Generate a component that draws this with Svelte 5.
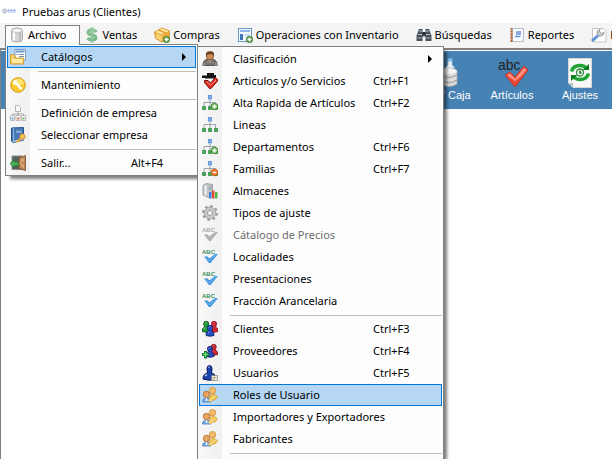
<script>
  const bar = [
    { label: 'Archivo', icon: 'db', open: true },
    { label: 'Ventas', icon: 'dollar' },
    { label: 'Compras', icon: 'box' },
    { label: 'Operaciones con Inventario', icon: 'form' },
    { label: 'Búsquedas', icon: 'binoculars' },
    { label: 'Reportes', icon: 'report' },
    { label: 'Herramientas', icon: 'tool' }
  ];
  const fileMenu = [
    { label: 'Catálogos', icon: 'folder', sub: true, active: true },
    null,
    { label: 'Mantenimiento', icon: 'wrench' },
    null,
    { label: 'Definición de empresa', icon: 'org' },
    { label: 'Seleccionar empresa', icon: 'book' },
    null,
    { label: 'Salir...', icon: 'exit', key: 'Alt+F4' }
  ];
  const catalogMenu = [
    { label: 'Clasificación', icon: 'person', sub: true },
    { label: 'Articulos y/o Servicios', icon: 'abcRed', key: 'Ctrl+F1' },
    { label: 'Alta Rapida de Artículos', icon: 'treeAdd', key: 'Ctrl+F2' },
    { label: 'Lineas', icon: 'tree' },
    { label: 'Departamentos', icon: 'treeAdd', key: 'Ctrl+F6' },
    { label: 'Familias', icon: 'treeDel', key: 'Ctrl+F7' },
    { label: 'Almacenes', icon: 'server' },
    { label: 'Tipos de ajuste', icon: 'gear' },
    { label: 'Cátalogo de Precios', icon: 'abcGray', disabled: true },
    { label: 'Localidades', icon: 'abc' },
    { label: 'Presentaciones', icon: 'abc' },
    { label: 'Fracción Arancelaria', icon: 'abc' },
    null,
    { label: 'Clientes', icon: 'clients', key: 'Ctrl+F3' },
    { label: 'Proveedores', icon: 'suppliers', key: 'Ctrl+F4' },
    { label: 'Usuarios', icon: 'user', key: 'Ctrl+F5' },
    { label: 'Roles de Usuario', icon: 'roles', active: true },
    { label: 'Importadores y Exportadores', icon: 'roles' },
    { label: 'Fabricantes', icon: 'roles' },
    null
  ];
</script>

{#snippet pawn(x, y, c, d)}
  <g transform="translate({x} {y})">
    <path d="M.5 10.500Q0 7 3 6L2 3.500Q1.500 .3 4.500.3T7 3.500L6 6Q9 7 8.500 10.500Q4.500 12 .5 10.500Z" fill={c} stroke={d} stroke-width=".8" />
    <path d="M3.500 2.500 4.500 1.500M2.500 7.500 3.500 7" stroke="#fff" stroke-width=".9" opacity=".75" />
  </g>
{/snippet}

{#snippet icon(name)}
  <svg class="icon" viewBox="0 0 16 16" aria-hidden="true" fill="none">
    {#if name === 'db'}
      <path d="M2.500 3.500Q2.500 1 8 1T13.500 3.500V12.500Q13.500 15 8 15T2.500 12.500Z" fill="#d4d4d4" stroke="#a2a2a2" stroke-width=".8" />
      <path d="M5 4V13.500" stroke="#fff" stroke-width="2" />
      <path d="M11 4V14" stroke="#bcbcbc" stroke-width="2" />
      <ellipse cx="8" cy="3.500" rx="5.200" ry="2" fill="#f7f7f7" stroke="#b0b0b0" stroke-width=".7" />
    {:else if name === 'dollar'}
      <path d="M12.500 5Q11 3 8 3Q4 3 4 5.500Q4 7.500 8 8Q12 8.700 12 10.700Q12 13 8 13Q5 13 3.500 11M8 .5V15.500" stroke="#7cba89" stroke-width="3" />
      <path d="M11.500 4Q8 2.500 5 4.500M8 1V15" stroke="#a9d8b1" stroke-width=".8" />
    {:else if name === 'box'}
      <path d="M.5 5 8 1 15.500 4V11L8 15 1.500 11.500Z" fill="#f1b13f" stroke="#c98a2a" stroke-width=".8" />
      <path d="M.5 5 8 7.800 15.500 4 8 1Z" fill="#ffe7a0" stroke="#d99d32" stroke-width=".6" />
      <path d="M2 6.200 8 8.500V14.200L2 11.200Z" fill="#fbd170" />
      <path d="M4.500 3 11.500 6V8.500" stroke="#e3a133" stroke-width="1.500" />
      {@render plus()}
    {:else if name === 'form'}
      <rect x="1.500" y="1.500" width="13" height="13" fill="#f4f8fd" stroke="#6c95c8" />
      <path d="M3 4H13" stroke="#8db4e6" stroke-width="2" />
      <path d="M4.500 7V13" stroke="#4173b5" stroke-width="3" />
      <path d="M7.500 7H13V9.500H7.500Z" fill="#c9dcf4" />
      {@render plus()}
    {:else if name === 'binoculars'}
      <path d="M3 2H6.500V5H9.500V2H13L15.500 9V14H9.500V9.500H6.500V14H.5V9Z" fill="#46525c" />
      <path d="M3 4H6M10 4H13M2 7.500H6M10 7.500H14M1.500 11H5.500M10.500 11H14.500" stroke="#aeb8bf" />
      <path d="M7 6.500H9" stroke="#161d22" stroke-width="2" />
    {:else if name === 'report'}
      <path d="M3.500 1.500H14.500V14.500H3.500Z" fill="#fbfcff" stroke="#b4bdcc" />
      <path d="M2.500 1V15" stroke="#a9613a" stroke-width="2" />
      <path d="M1 3H3.500M1 6H3.500M1 9H3.500M1 12H3.500" stroke="#e6c4a8" />
      <path d="M7 5H12M7 7H12M6 9.500H11.500" stroke="#6690d8" stroke-width="1.300" />
      <path d="M14.500 11 11.500 14.500H14.500Z" fill="#d4dbe5" />
    {:else if name === 'tool'}
      <path d="M1.500 1.500H12L15 4.500V15H1.500Z" fill="#fff" stroke="#c6c6c6" />
      <path d="M1 14 7 8.500" stroke="#5f92d6" stroke-width="3" />
      <path d="M6 6Q6 3 9 2.500L8.500 5 10.500 6.500 13 5.500Q12.500 9.500 8 9Z" fill="#ccd2d9" stroke="#80868e" stroke-width=".8" />
    {:else if name === 'folder'}
      <path d="M5 .5H15.500V11H5Z" fill="#fffdf4" stroke="#7c9cc8" />
      <path d="M6 2.500H14.500" stroke="#6c9ad5" stroke-width="2" />
      <path d="M6.500 5.500H8M9 5.500H14M9 7.500H14" stroke="#7892b7" />
      <path d="M.5 15V5.500H4L5 7V9H13.500V15Z" fill="#f6ce67" stroke="#d6a03c" />
      <path d="M2 10H12.500V14H2Z" fill="#ffe7a4" />
    {:else if name === 'wrench'}
      <circle cx="8" cy="8" r="7.300" fill="#f7ca2d" stroke="#d89a12" />
      <path d="M2 7Q3 2 8 1.800T14 7Q8 10 2 7Z" fill="#ffe570" />
      <path d="M6 6 11 11.500" stroke="#fff" stroke-width="2.500" stroke-linecap="round" />
      <path d="M4 6.500 4.500 4 7 3.500M3.500 6 6 7" stroke="#fff" stroke-width="1.500" />
    {:else if name === 'org'}
      <path d="M5.500.5H8.500L10.500 2.500V6.500H5.500Z" fill="#fff" stroke="#a5a5a5" stroke-width=".8" />
      <path d="M8 6.500V9M2.500 11V9H13.500V11M8 9V11" stroke="#aaa" />
      <path d="M.5 10.500H4.500V15.500H.5ZM6 10.500H10V15.500H6ZM11.500 10.500H15.500V15.500H11.500Z" fill="#fff" stroke="#aaa" stroke-width=".8" />
      <path d="M1.500 12.500H3.500V14.500H1.500Z" fill="#5ba4e6" /><path d="M7 12.500H9V14.500H7Z" fill="#e97757" /><path d="M12.500 12.500H14.500V14.500H12.500Z" fill="#6abb62" />
    {:else if name === 'book'}
      <path d="M1.500 1 13.500.5V13L3 15.500 1.500 14Z" fill="#4777b5" stroke="#24528c" />
      <path d="M3.500 1V14" stroke="#8fb3de" /><path d="M6 3.500H11.500V6H6Z" fill="#80a8da" />
      <path d="M3 14.500 13.500 12" stroke="#e7edf5" />
      <circle cx="12.500" cy="9.500" r="2.700" fill="#f7c55c" stroke="#be7f24" stroke-width=".8" />
      <path d="M11 11 6.500 15M8 13.500 9.500 15" stroke="#e3a33b" stroke-width="1.700" />
    {:else if name === 'exit'}
      <path d="M2 1H12V14.500H2Z" fill="#5b625e" stroke="#858b84" />
      <path d="M9 2.500 15.500.5V15.500L9 13.500Z" fill="#b98453" stroke="#7b4e2b" stroke-width=".8" />
      <path d="M11 4 14 3V7H11ZM11 9H14V13L11 12Z" fill="#d5a675" /><circle cx="10.500" cy="8" r=".7" fill="#ffe084" />
      <path d="M0 8.500 4.500 4.500V7H8.500V10.500H4.500V13Z" fill="#4eb055" stroke="#1f7730" stroke-width=".8" />
    {:else if name === 'person'}
      <path d="M.8 14.500Q1 9 5 8.500H11Q15 9 15.200 14.500Z" fill="#77716b" stroke="#5a5552" />
      <path d="M6 8.500 8 13 10 8.500Z" fill="#9a948c" /><path d="M3.500 11.500H12.500" stroke="#918b85" />
      <circle cx="8" cy="5" r="3.800" fill="#c98a55" stroke="#7a4a2a" stroke-width=".7" />
      <path d="M4 5Q3 .5 8 .3T12 5Q10.500 3 8 3T4 5Z" fill="#6c4020" />
      <path d="M2 12V15M14 12V15" stroke="#b7b1a8" />
    {:else if name === 'abcRed'}
      <path d="M5 0H12V2H14V5.500H3V5H0V2.500H5Z" fill="#171717" />
      <path d="M2.500 7.500H6L8.500 10 13.500 4.500 15.500 6.500V8L9 15.500H7.500L2.500 9.500Z" fill="#e62d21" stroke="#6e0c08" />
      <path d="M4.500 8.500 8.500 12 14 7" stroke="#ff9a8f" />
    {:else if name === 'tree' || name === 'treeAdd' || name === 'treeDel'}
      <path d="M8 4.500V7.500M2 11V7.500H13.500V11M8 7.500V11" stroke="#9aa4aa" />
      <rect x="6.500" y=".5" width="3" height="3.500" fill="#78aef0" stroke="#5c8fd6" stroke-width=".8" />
      <path d="M.5 11.500H3.500V14.500H.5ZM6.500 11.500H9.500V14.500H6.500ZM12.500 11.500H15.500V14.500H12.500Z" fill="#49ad56" stroke="#2f8a44" stroke-width=".8" />
      {#if name === 'treeAdd'}<circle cx="12.500" cy="11.500" r="3.300" fill="#74bc60" stroke="#3b8233" stroke-width=".8" /><path d="M10.500 11.500H14.500M12.500 9.500V13.500" stroke="#fff" stroke-width="1.400" />{/if}
      {#if name === 'treeDel'}<circle cx="12.500" cy="11.500" r="3.300" fill="#f07827" stroke="#bf4b10" stroke-width=".8" /><path d="M10.500 11.500H14.500" stroke="#fff" stroke-width="1.400" />{/if}
    {:else if name === 'server'}
      <path d="M1 2.500 4 .5 10.500 1.500V11L6.500 14.500 1 12Z" fill="#c4c7ca" stroke="#8c9094" stroke-width=".8" />
      <path d="M3.500 2.500V12.500" stroke="#eceef0" stroke-width="2" /><path d="M6.500 4H9.500M6.500 6H9.500" stroke="#8c9298" />
      <path d="M7 9H9.500V15.500H7Z" fill="#4381e0" /><path d="M10 7.500H12.500V15.500H10Z" fill="#df4937" /><path d="M13 9H15.500V15.500H13Z" fill="#52b849" />
    {:else if name === 'gear'}
      <circle cx="8" cy="8" r="6.800" stroke="#999" stroke-width="2.200" stroke-dasharray="2.650 2.690" />
      <circle cx="8" cy="8" r="4.300" stroke="#c8c8c8" stroke-width="3.300" />
      <circle cx="8" cy="8" r="5.800" stroke="#a0a0a0" stroke-width=".8" /><circle cx="8" cy="8" r="2.500" fill="#f5f5f5" stroke="#949494" />
    {:else if name === 'abc' || name === 'abcGray'}
      <text x="0" y="5" font-family="Liberation Sans, sans-serif" font-size="6" font-weight="bold" fill={name === 'abc' ? '#438e5b' : '#aaa'}>ABC</text>
      <path d="M2 7.500H5.500L7.500 9.500 13 5H16L8.500 14H7Z" fill={name === 'abc' ? '#3c93e0' : '#ababab'} />
      <path d="M4 8.500 7.500 12 14 5.500" stroke={name === 'abc' ? '#7cc0f5' : '#c4c4c4'} />
    {:else if name === 'clients'}
      {@render pawn(-.3, 0, '#1f9b38', '#06491a')}{@render pawn(7.5, 0, '#d22934', '#770b17')}{@render pawn(3.5, 4, '#2551c5', '#081b66')}
    {:else if name === 'suppliers'}
      {@render pawn(7.2, 1, '#d12831', '#730e18')}{@render pawn(3.5, 3, '#244bb8', '#091b62')}
      <path d="M0 11.500H7M3.500 8V15.500" stroke="#0b732d" stroke-width="3" /><path d="M.8 11.500H6.200M3.500 9V14.500" stroke="#67dd76" stroke-width="1.300" />
    {:else if name === 'user'}
      <path d="M1 14Q1 9 5.500 8L5 4Q5 .5 7.500.5T10 4L9.500 8Q14 9 14 14Q7 16.500 1 14Z" fill="#1c43ab" stroke="#07195d" />
      <path d="M6.500 2.500 7.500 1.800M3 11 5 9.500" stroke="#b8d0ff" stroke-width="1.300" />
      <path d="M9.500 10.500H15.500V15.500H9.500Z" fill="#f4f0dd" stroke="#808080" stroke-width=".7" /><path d="M10.500 12.500H14.500M10.500 14.200H13" stroke="#a58a5b" stroke-width=".8" />
    {:else if name === 'roles'}
      <circle cx="10.500" cy="3.700" r="3.200" fill="#f3bb69" stroke="#c98a3c" stroke-width=".8" />
      <path d="M7.500 11Q7.500 7.500 11 7.500T15.500 10L13 13H7.500Z" fill="#f4d465" stroke="#d0a23c" stroke-width=".8" />
      <circle cx="4.500" cy="7.500" r="3.200" fill="#eaa763" stroke="#a9632a" stroke-width=".8" />
      <path d="M.5 15Q.5 11 4.500 11T9 15Z" fill="#75ade8" stroke="#4b7ebc" stroke-width=".8" />
      <path d="M4.500 11V14" stroke="#fff" stroke-width="1.500" /><path d="M7 14 13.500 9" stroke="#e2a540" stroke-width="3" /><path d="M7 14 13.500 9" stroke="#ffe07a" stroke-width="1.700" />
    {/if}
  </svg>
{/snippet}

{#snippet plus()}
  <circle cx="12.500" cy="12.500" r="3.200" fill="#629c46" stroke="#3b7431" stroke-width=".7" />
  <path d="M10.500 12.500H14.500M12.500 10.500V14.500" stroke="#fff" stroke-width="1.400" />
{/snippet}

{#snippet menu(items)}
  {#each items as item}
    {#if item}
      <button class="item" class:active={item.active} disabled={item.disabled} role="menuitem">
        {@render icon(item.icon)}
        <span class="label">{item.label}</span>
        {#if item.key}<span class="key">{item.key}</span>{/if}
        {#if item.sub}<svg class="arrow" viewBox="0 0 4 8" aria-hidden="true"><path d="M0 0 4 4 0 8Z" /></svg>{/if}
      </button>
    {:else}
      <hr />
    {/if}
  {/each}
{/snippet}

<div class="window">
  <header class="title">
    <svg class="logo" viewBox="0 0 14 7" aria-hidden="true" fill="none">
      <circle cx="2.500" cy="3" r="1.800" stroke="#9aa4bd" /><path d="M3 .5V5.500" stroke="#b0b6c6" />
      <path d="M5.500 2.500H7.500M8.500 2.500H10.500M11.500 2.500H13.500" stroke="#7c96e6" stroke-width="2" /><path d="M5.500 4.500H13.500" stroke="#d5dcf7" />
    </svg>
    <span>Pruebas arus (Clientes)</span>
  </header>

  <nav class="menubar">
    {#each bar as entry}
      <button class:open={entry.open}>{@render icon(entry.icon)}<span>{entry.label}</span></button>
    {/each}
  </nav>

  <main>
    <div class="toolbar">
      <button>
        <svg class="big" viewBox="0 0 32 32" aria-hidden="true">
          <path d="M20 9V3H24V9L27 12H17Z" fill="#eef3f8" stroke="#b3c3d2" stroke-width=".8" /><path d="M20 4H24" stroke="#7cc0f0" stroke-width="3" />
          <path d="M12 15H29V28Q21 33 12 28Z" fill="#dcdcdc" stroke="#aaa" stroke-width=".8" />
          <path d="M12 19Q21 24 29 19M12 24Q21 29 29 24" fill="none" stroke="#999" /><ellipse cx="20.500" cy="15" rx="8.500" ry="3" fill="#f6f6f6" />
        </svg>
        <span>CxC / Caja</span>
      </button>
      <button>
        <svg class="big" viewBox="0 0 32 32" aria-hidden="true">
          <text x="2" y="14" font-family="Liberation Sans, sans-serif" font-size="14" fill="#222">abc</text>
          <path d="M9 19 14 16 19 21 28 10 32 14 19 31Z" fill="#ee4938" stroke="#b9372c" stroke-linejoin="round" /><path d="M11 19 14 17.500 19 23 28 12 30.500 14Q25 21 19 25Z" fill="#ff9687" />
        </svg>
        <span>Artículos</span>
      </button>
      <button>
        <svg class="big" viewBox="0 0 32 32" aria-hidden="true" fill="none">
          <path d="M4.500 2.500H27.500V31.500H9L4.500 27Z" fill="#f7f8f6" stroke="#d6d9d7" /><path d="M4.500 27H9V31.500Z" fill="#b8c0c0" />
          <path d="M7.500 15.500Q9 9.500 16 9.500Q20 9.500 22 12M24.500 17.500Q23 23.500 16 23.500Q12 23.500 10 21" stroke="#1fa535" stroke-width="3.500" />
          <path d="M18.500 14H25V8ZM13.500 19H7V25Z" fill="#0b7c20" /><circle cx="16" cy="16.500" r="3.500" stroke="#2b8c3a" stroke-width="1.300" /><path d="M16 14.500V17H17.500" stroke="#116b20" stroke-width="1.500" />
        </svg>
        <span>Ajustes</span>
      </button>
    </div>
  </main>

  <div class="menu file" role="menu">{@render menu(fileMenu)}</div>
  <div class="menu catalogs" role="menu">{@render menu(catalogMenu)}</div>
</div>

<style>
  :global(body) { background: #fff; overflow: hidden; }
  .window { position: relative; height: 100vh; overflow: hidden; display: flex; flex-direction: column; font: 11px/16px "Noto Sans", "Open Sans", sans-serif; color: #000; }
  button { font: inherit; color: inherit; border: 0; background: none; padding: 0; margin: 0; text-align: left; white-space: nowrap; }
  svg { display: block; flex: none; }
  .title { display: flex; align-items: center; gap: 6px; height: 23px; padding-left: 2px; flex: none; }
  .logo { width: 14px; height: 7px; }
  .menubar { display: flex; height: 25px; padding: 2px 0 4px 5px; background: #f4f4f4; box-sizing: border-box; flex: none; overflow: hidden; }
  .menubar button { display: flex; align-items: center; gap: 3px; padding: 0 12px 0 3px; border: 1px solid transparent; border-bottom: 0; flex: none; }
  .menubar button.open { background: #fdfdfd; border-color: #808080; }
  .icon { width: 16px; height: 16px; }
  main { flex: 1; border-left: 1px solid #808080; padding-top: 1px; border-top: 2px solid #808080; }
  .toolbar { display: flex; height: 58px; padding: 5px 0 0 409px; background: #4682b4; box-sizing: border-box; overflow: hidden; }
  .toolbar button { width: 68px; flex: none; display: flex; flex-direction: column; align-items: center; color: #fff; font: 11px/14px "Liberation Sans", Arial, sans-serif; }
  .big { width: 32px; height: 32px; }
  .menu { position: absolute; background: linear-gradient(90deg, #f8f8f8, #f0f0f0 24px, #fdfdfd 24px); border: 1px solid #808080; padding: 1px; box-sizing: border-box; box-shadow: 4px 4px 3px -1px rgba(0, 0, 0, .5); }
  .file { left: 5px; top: 44px; width: 193px; }
  /* opens the top border under the selected menu bar entry */
  .file::before { content: ""; position: absolute; left: 0; top: -1px; width: 73px; height: 1px; background: #fdfdfd; }
  .catalogs { left: 197px; top: 46px; width: 247px; padding-bottom: 24px; }
  .item { display: flex; align-items: center; width: 100%; height: 22px; padding: 0 9px 0 2px; border: 1px solid transparent; box-sizing: border-box; }
  .item.active { background: #b5d7f3; border-color: #0078d7; }
  .item:disabled { color: #6d6d6d; }
  .label { flex: 1; padding-left: 15px; }
  .key { width: 59px; }
  .file .key { width: 55px; }
  .arrow { width: 4px; height: 8px; }
  hr { height: 1px; margin: 3px 0 2px 31px; border: 0; background: #bdbdbd; }
</style>
